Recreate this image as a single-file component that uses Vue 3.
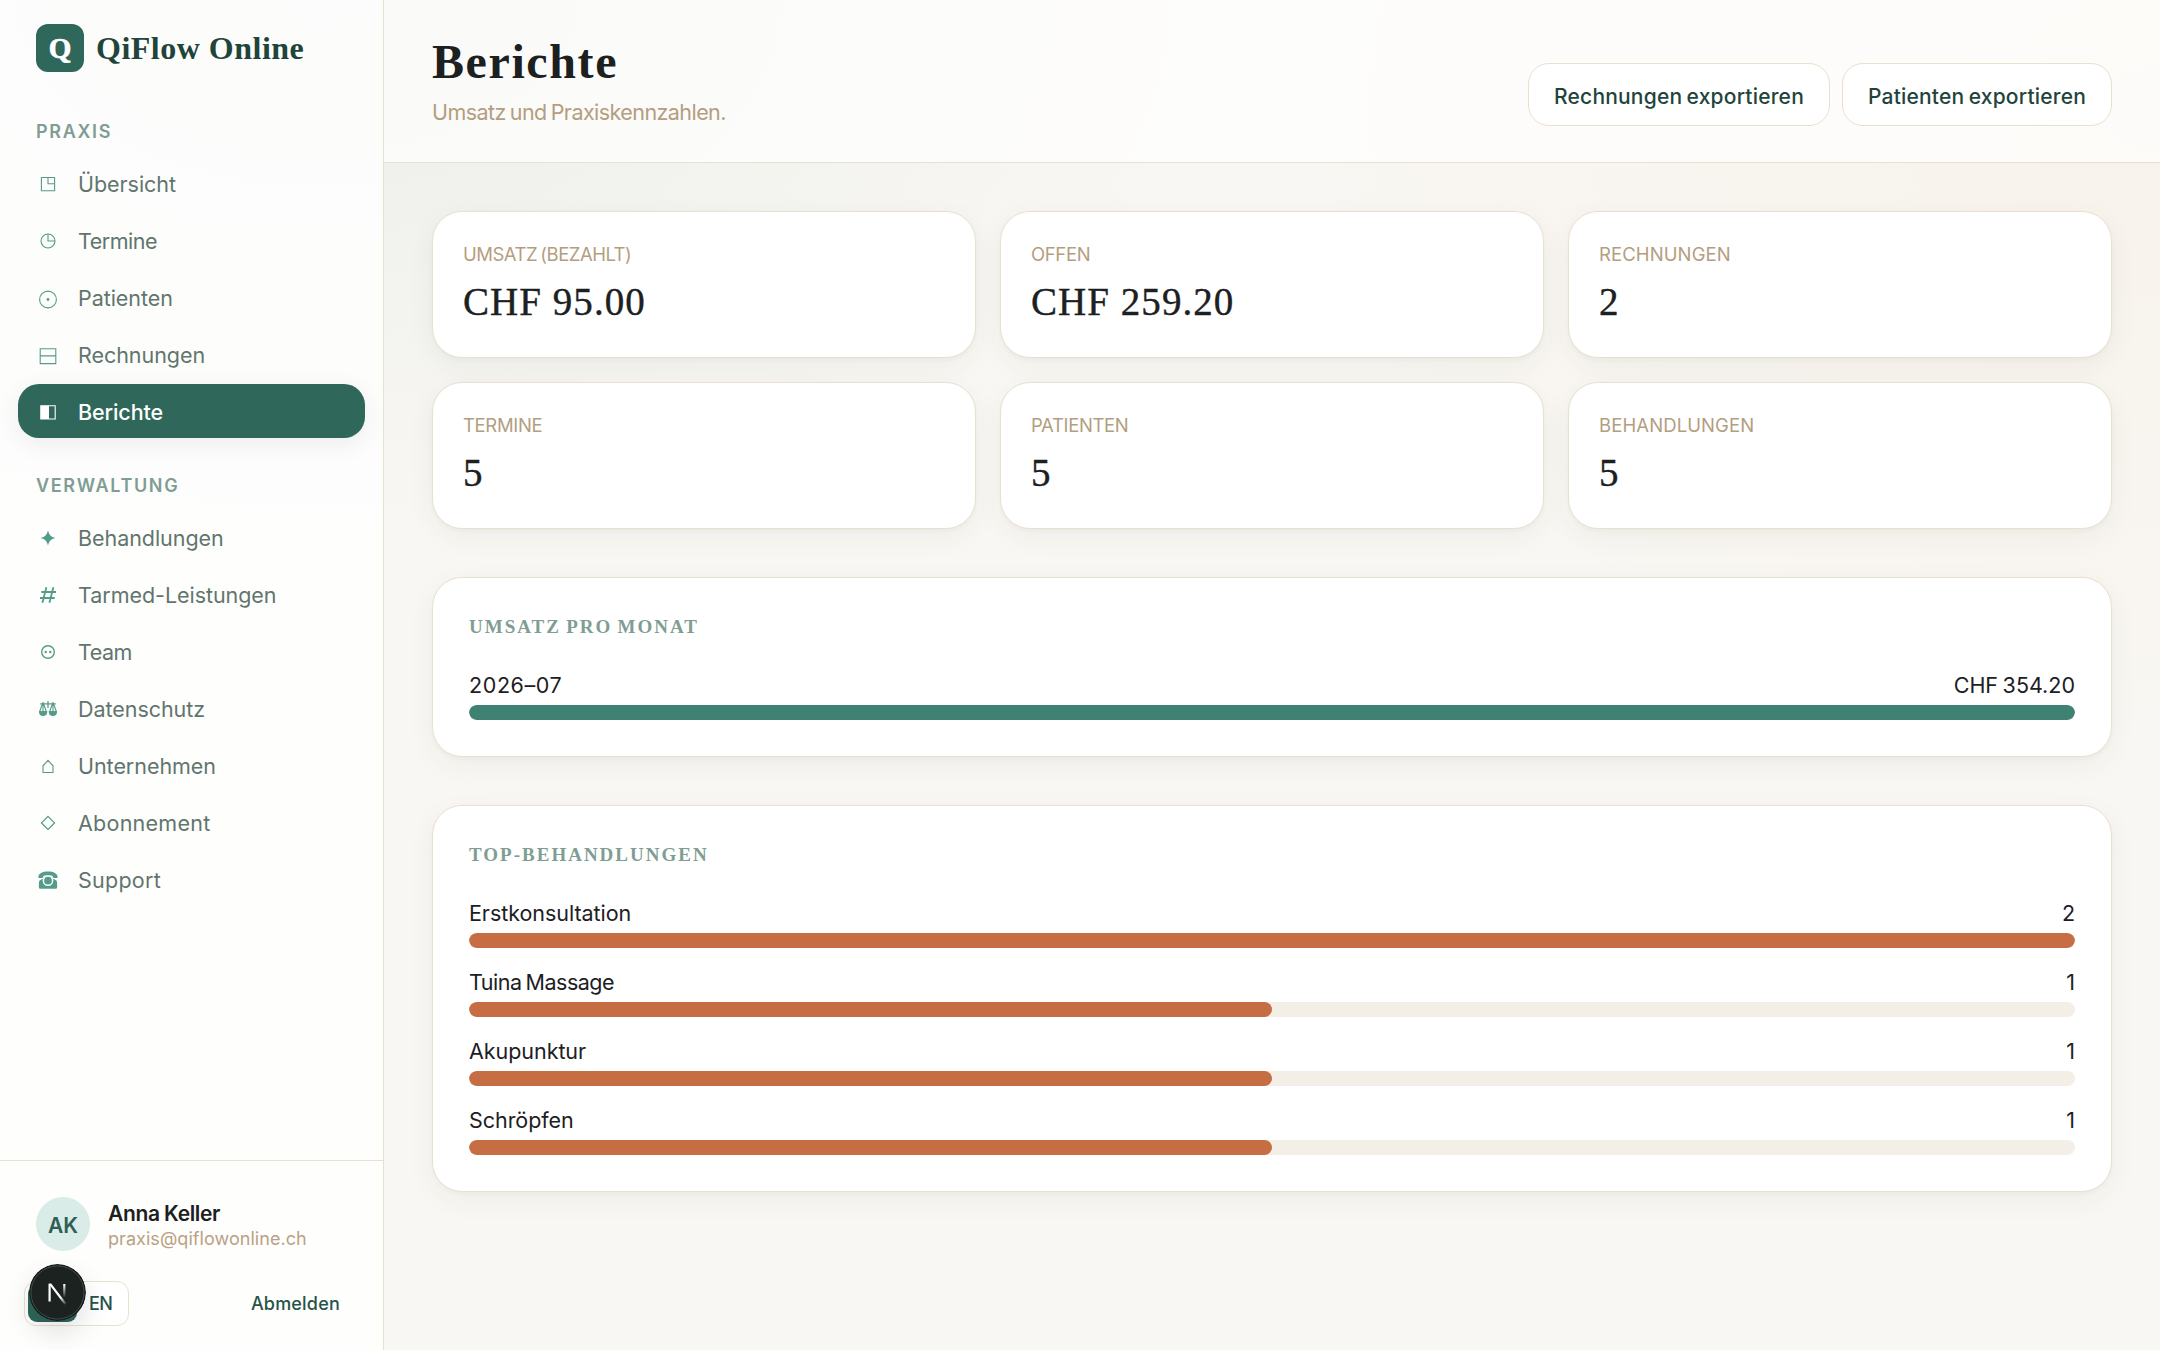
<script setup>
const groups = [
  {
    title: 'Praxis',
    items: [
      { label: 'Übersicht', icon: 'overview' },
      { label: 'Termine', icon: 'clock', tight: true },
      { label: 'Patienten', icon: 'dot' },
      { label: 'Rechnungen', icon: 'invoice' },
      { label: 'Berichte', icon: 'report', active: true },
    ],
  },
  {
    title: 'Verwaltung',
    items: [
      { label: 'Behandlungen', icon: 'star' },
      { label: 'Tarmed-Leistungen', icon: 'hash' },
      { label: 'Team', icon: 'team', tight: true },
      { label: 'Datenschutz', icon: 'scales' },
      { label: 'Unternehmen', icon: 'house' },
      { label: 'Abonnement', icon: 'diamond', loose: true },
      { label: 'Support', icon: 'phone', loose: true },
    ],
  },
]

const stats = [
  { label: 'Umsatz (bezahlt)', value: 'CHF 95.00', tight: true },
  { label: 'Offen', value: 'CHF 259.20' },
  { label: 'Rechnungen', value: '2', loose: true },
  { label: 'Termine', value: '5' },
  { label: 'Patienten', value: '5' },
  { label: 'Behandlungen', value: '5', loose: true },
]

const panels = [
  {
    title: 'Umsatz pro Monat',
    tone: 'green',
    rows: [{ label: '2026–07', value: 'CHF 354.20', pct: 100, loose: true }],
  },
  {
    title: 'Top-Behandlungen',
    tone: 'orange',
    rows: [
      { label: 'Erstkonsultation', value: '2', pct: 100 },
      { label: 'Tuina Massage', value: '1', pct: 50, tight: true },
      { label: 'Akupunktur', value: '1', pct: 50 },
      { label: 'Schröpfen', value: '1', pct: 50 },
    ],
  },
]
</script>

<template>
  <div class="app">
    <aside class="sidebar">
      <div class="brand">
        <span class="brand-mark">Q</span>
        <span class="brand-name">QiFlow Online</span>
      </div>

      <nav v-for="g in groups" :key="g.title" class="group">
        <h2 class="group-title">{{ g.title }}</h2>
        <a
          v-for="i in g.items"
          :key="i.label"
          class="item"
          :class="{ active: i.active, tight: i.tight, loose: i.loose }"
        >
          <svg class="icon" viewBox="0 0 24 24" fill="none" stroke="currentColor" stroke-width="1.1">
            <template v-if="i.icon === 'overview'">
              <path d="M5.4 5.5h13.2v13.2H5.4zM12 5.5v6.3h6.6" />
            </template>
            <template v-else-if="i.icon === 'clock'">
              <circle cx="12" cy="12" r="7" /><path d="M12 5v7h7" />
            </template>
            <template v-else-if="i.icon === 'dot'">
              <circle cx="12" cy="13.5" r="8.4" /><circle cx="12" cy="13.5" r="1.4" fill="currentColor" stroke="none" />
            </template>
            <template v-else-if="i.icon === 'invoice'">
              <path d="M4.2 5.8h15.6v14.8H4.2zM4.2 12.9h15.6" />
            </template>
            <template v-else-if="i.icon === 'report'">
              <path d="M4.8 5.8h14.4v13.2H4.8z" /><path d="M4.8 5.8H13v13.2H4.8z" fill="currentColor" stroke="none" />
            </template>
            <template v-else-if="i.icon === 'star'">
              <path d="M12 4.6c1.3 4.6 2.8 6.2 7.4 7.4c-4.6 1.2-6.1 2.8-7.4 7.4c-1.3-4.6-2.8-6.2-7.4-7.4c4.6-1.2 6.1-2.8 7.4-7.4z" fill="currentColor" stroke="none" />
            </template>
            <template v-else-if="i.icon === 'hash'">
              <path d="M10.4 4.2L6.4 19.8M17.4 4.2L13.4 19.8M5.3 9H20M4 15H18.7" stroke-width="1.8" />
            </template>
            <template v-else-if="i.icon === 'team'">
              <circle cx="12" cy="12" r="6.3" stroke-width="1.4" />
              <circle cx="9.7" cy="12" r="1.2" fill="currentColor" stroke="none" />
              <circle cx="14.3" cy="12" r="1.2" fill="currentColor" stroke="none" />
            </template>
            <template v-else-if="i.icon === 'scales'">
              <path d="M4.2 6.8h15.600M12 4v7" stroke-width="1.3" />
              <path d="M7 5.2l-3.200 9M7 5.200l3.200 9M7 5.200v9M17 5.200l-3.200 9M17 5.200l3.200 9M17 5.200v9" stroke-width="1.100" />
              <path d="M2.900 14h8.400c0 3.200-1.300 5-4.200 5s-4.200-1.800-4.200-5zM12.700 14h8.400c0 3.200-1.300 5-4.200 5s-4.200-1.800-4.200-5z" fill="currentColor" stroke="none" />
            </template>
            <template v-else-if="i.icon === 'house'">
              <path d="M7 18.500v-6.700L12 6.400l5 5.400v6.700z" />
            </template>
            <template v-else-if="i.icon === 'diamond'">
              <path d="M12 5.400l6.500 6.500l-6.500 6.500l-6.500-6.500z" stroke-width="1.300" />
            </template>
            <template v-else>
              <path d="M2.400 9.200C2.400 5.600 6.500 3.600 12 3.600s9.600 2 9.600 5.600v.5q-2.400.8-4.600-.3l-.8-1.900H7.800L7 9.400q-2.200 1.100-4.600.3z" fill="currentColor" stroke="none" />
              <path d="M8.400 8.700h7.200l1.500 2.400q4 .5 4 3.600v4.700q0 1.400-1.400 1.400H4.300q-1.400 0-1.400-1.400v-4.700q0-3.100 4-3.600z" fill="currentColor" stroke="none" />
              <circle cx="12" cy="12.700" r="4.600" class="dial" stroke-width="1.500" fill="currentColor" />
            </template>
          </svg>
          <span>{{ i.label }}</span>
        </a>
      </nav>

      <footer class="account">
        <div class="user">
          <span class="avatar">AK</span>
          <div class="who">
            <strong>Anna Keller</strong>
            <small>praxis@qiflowonline.ch</small>
          </div>
        </div>
        <div class="actions">
          <div class="lang">
            <span class="lang-on"></span>
            <span class="lang-off">EN</span>
            <svg class="dev" viewBox="0 0 57 57">
              <defs>
                <linearGradient id="slant" gradientUnits="userSpaceOnUse" x1="20" y1="20" x2="37" y2="41">
                  <stop offset=".65" stop-color="#fff" />
                  <stop offset="1" stop-color="#fff" stop-opacity="0" />
                </linearGradient>
                <linearGradient id="stem" gradientUnits="userSpaceOnUse" x1="0" y1="20" x2="0" y2="34">
                  <stop offset="0" stop-color="#fff" />
                  <stop offset="1" stop-color="#fff" stop-opacity="0" />
                </linearGradient>
              </defs>
              <circle cx="28.5" cy="28.5" r="28.5" fill="#161a19" />
              <circle cx="28.5" cy="28.5" r="26.6" fill="#1c2220" stroke="#484d4b" stroke-width="1" />
              <path d="M20.6 37.5V20" stroke="#fff" stroke-width="2.2" />
              <path d="M19.5 19.5h2.7L37.5 39.5l-1.9 1.3z" fill="url(#slant)" />
              <path d="M34.2 20h2.2v13h-2.2z" fill="url(#stem)" />
            </svg>
          </div>
          <span class="logout">Abmelden</span>
        </div>
      </footer>
    </aside>

    <main class="main">
      <header class="top">
        <div>
          <h1>Berichte</h1>
          <p>Umsatz und Praxiskennzahlen.</p>
        </div>
        <div class="buttons">
          <button class="btn-a">Rechnungen exportieren</button>
          <button class="btn-b">Patienten exportieren</button>
        </div>
      </header>

      <div class="content">
        <section class="stats">
          <article v-for="s in stats" :key="s.label" class="card stat">
            <div class="stat-label" :class="{ tight: s.tight, loose: s.loose }">{{ s.label }}</div>
            <div class="stat-value">{{ s.value }}</div>
          </article>
        </section>

        <section v-for="p in panels" :key="p.title" class="card panel" :class="p.tone">
          <h3>{{ p.title }}</h3>
          <div class="rows">
            <div v-for="r in p.rows" :key="r.label" class="row">
              <div class="row-head">
                <span :class="{ loose: r.loose, tight: r.tight }">{{ r.label }}</span>
                <span class="num">{{ r.value }}</span>
              </div>
              <div class="track"><div class="fill" :style="{ width: r.pct + '%' }"></div></div>
            </div>
          </div>
        </section>
      </div>
    </main>
  </div>
</template>

<style>
html,
body {
  margin: 0;
}
</style>

<style scoped>
* {
  box-sizing: border-box;
}
.app {
  --line: #e9e1d0;
  --serif: "Liberation Serif", serif;
  display: flex;
  width: 2160px;
  height: 1350px;
  overflow: hidden;
  font-family: Inter, "Noto Sans", sans-serif;
  color: #1c201f;
  background:
    radial-gradient(1200px 720px at 15% 0, rgba(62, 128, 112, 0.07), transparent 75%),
    radial-gradient(1100px 800px at 100% 8%, rgba(215, 135, 60, 0.045), transparent 80%),
    #f9f7f3;
}
.sidebar {
  flex: none;
  width: 384px;
  height: 100%;
  display: flex;
  flex-direction: column;
  border-right: 1px solid var(--line);
  background: rgba(255, 255, 255, 0.8);
}
.brand {
  display: flex;
  align-items: center;
  gap: 12px;
  padding: 24px 36px 0;
}
.brand-mark {
  width: 48px;
  height: 48px;
  border-radius: 12px;
  background: #2f675b;
  color: #fff;
  font: 700 29px/48px var(--serif);
  -webkit-text-stroke: 0.7px currentColor;
  text-align: center;
}
.brand-name {
  font: 700 32px/48px var(--serif);
  letter-spacing: 0.5px;
  color: #1f443c;
  white-space: nowrap;
}
.group {
  display: flex;
  flex-direction: column;
  gap: 3px;
  margin: 0 18px;
}
.group-title {
  margin: 0 0 8px 18px;
  padding-top: 46px;
  font-size: 18px;
  line-height: 27px;
  font-weight: 600;
  letter-spacing: 1.65px;
  text-transform: uppercase;
  color: #7f9d93;
}
.group + .group .group-title {
  padding-top: 34px;
}
.item {
  display: flex;
  align-items: center;
  height: 54px;
  padding: 2px 0 0 18px;
  gap: 18px;
  border-radius: 21px;
  font-size: 21.5px;
  letter-spacing: -0.05px;
  color: #61756e;
  white-space: nowrap;
}
.item.tight {
  letter-spacing: -0.5px;
}
.item.loose {
  letter-spacing: 0.25px;
}
.icon {
  width: 24px;
  height: 24px;
  flex: none;
  color: #559b89;
}
.dial {
  stroke: #fdfdfb;
}
.item.active {
  background: #2f675b;
  color: #fff;
  font-weight: 500;
  letter-spacing: -0.1px;
  box-shadow: 0 6px 24px rgba(30, 50, 45, 0.08);
}
.active .icon {
  color: #fff;
}
.account {
  margin-top: auto;
  height: 190px;
  border-top: 1px solid var(--line);
  padding: 36px 36px 0;
}
.user {
  display: flex;
  align-items: center;
  gap: 18px;
}
.avatar {
  width: 54px;
  height: 54px;
  border-radius: 50%;
  background: #d9ece7;
  color: #2f5f54;
  font-size: 21px;
  font-weight: 600;
  line-height: 57px;
  text-align: center;
}
.who {
  display: flex;
  flex-direction: column;
  padding-top: 2px;
}
.who strong {
  font-size: 21px;
  line-height: 27px;
  font-weight: 600;
  letter-spacing: -0.35px;
  word-spacing: -0.5px;
}
.who small {
  font-size: 18px;
  line-height: 23px;
  letter-spacing: 0.05px;
  color: #b8a284;
}
.actions {
  display: flex;
  align-items: center;
  justify-content: space-between;
  margin: 30px 7px 0 -12px;
}
.lang {
  position: relative;
  display: flex;
  align-items: center;
  width: 105px;
  height: 45px;
  padding: 3px;
  border: 1px solid var(--line);
  border-radius: 12px;
  background: #fff;
}
.lang-on {
  width: 49px;
  height: 37px;
  border-radius: 9px;
  background: #2f675b;
}
.lang-off {
  margin-left: 12px;
  font-size: 18px;
  font-weight: 500;
  letter-spacing: -0.5px;
  color: #265348;
}
.dev {
  position: absolute;
  left: 4px;
  top: -18px;
  width: 57px;
  height: 57px;
  border-radius: 50%;
  box-shadow: 0 12px 28px rgba(0, 0, 0, 0.12);
}
.logout {
  font-size: 18px;
  font-weight: 500;
  letter-spacing: 0.2px;
  color: #265348;
}
.main {
  flex: 1;
  min-width: 0;
}
.top {
  display: flex;
  justify-content: space-between;
  align-items: flex-end;
  height: 163px;
  padding: 36px 48px;
  border-bottom: 1px solid var(--line);
  background: rgba(255, 255, 255, 0.7);
}
h1 {
  margin: 0;
  font: 700 48px/52px var(--serif);
  letter-spacing: 1.6px;
}
.top p {
  margin: 10px 0 0;
  font-size: 21.5px;
  line-height: 28px;
  letter-spacing: -0.56px;
  word-spacing: -1.5px;
  color: #b39e7f;
}
.buttons {
  display: flex;
  gap: 12px;
}
button {
  height: 63px;
  padding: 4px 0 0;
  border: 1px solid var(--line);
  border-radius: 21px;
  background: #fff;
  color: #1f443c;
  font-family: inherit;
  font-size: 21px;
  font-weight: 500;
  letter-spacing: 0.2px;
  word-spacing: -1.5px;
  white-space: nowrap;
}
.btn-a {
  width: 302px;
}
.btn-b {
  width: 270px;
}
.content {
  padding: 48px;
  display: flex;
  flex-direction: column;
  gap: 48px;
}
.stats {
  display: grid;
  grid-template-columns: repeat(3, 1fr);
  gap: 24px;
}
.card {
  border: 1px solid var(--line);
  border-radius: 30px;
  background: #fff;
  box-shadow: 0 2px 4px rgba(40, 50, 45, 0.03), 0 8px 28px rgba(40, 50, 45, 0.05);
}
.stat {
  padding: 30px;
}
.stat-label {
  font-size: 18.5px;
  line-height: 25px;
  letter-spacing: -0.35px;
  text-transform: uppercase;
  color: #b39e7f;
}
.stat-label.tight {
  letter-spacing: -0.5px;
  word-spacing: -1.5px;
}
.stat-label.loose {
  letter-spacing: 0.1px;
}
.stat-value {
  margin: 11px 0 1px;
  font: 400 39px/48px var(--serif);
  letter-spacing: 1.05px;
  -webkit-text-stroke: 0.4px currentColor;
}
.panel {
  padding: 36px;
}
h3 {
  margin: 0 0 30px;
  font: 700 19px/26px var(--serif);
  letter-spacing: 2px;
  word-spacing: -1.5px;
  text-transform: uppercase;
  color: #7f9d93;
}
.rows {
  display: flex;
  flex-direction: column;
  gap: 19px;
}
.row-head {
  display: flex;
  justify-content: space-between;
  margin-bottom: 5px;
  font-size: 21.5px;
  line-height: 30px;
  letter-spacing: -0.05px;
  word-spacing: -1.5px;
}
.row-head .tight {
  letter-spacing: -0.5px;
}
.row-head .loose {
  letter-spacing: 0.6px;
}
.row-head .num {
  letter-spacing: 0;
}
.track {
  height: 15px;
  border-radius: 8px;
  overflow: hidden;
  background: #f3efe6;
}
.fill {
  height: 100%;
  border-radius: 8px;
  background: #c76d43;
}
.green .fill {
  background: #3f8173;
}
</style>
